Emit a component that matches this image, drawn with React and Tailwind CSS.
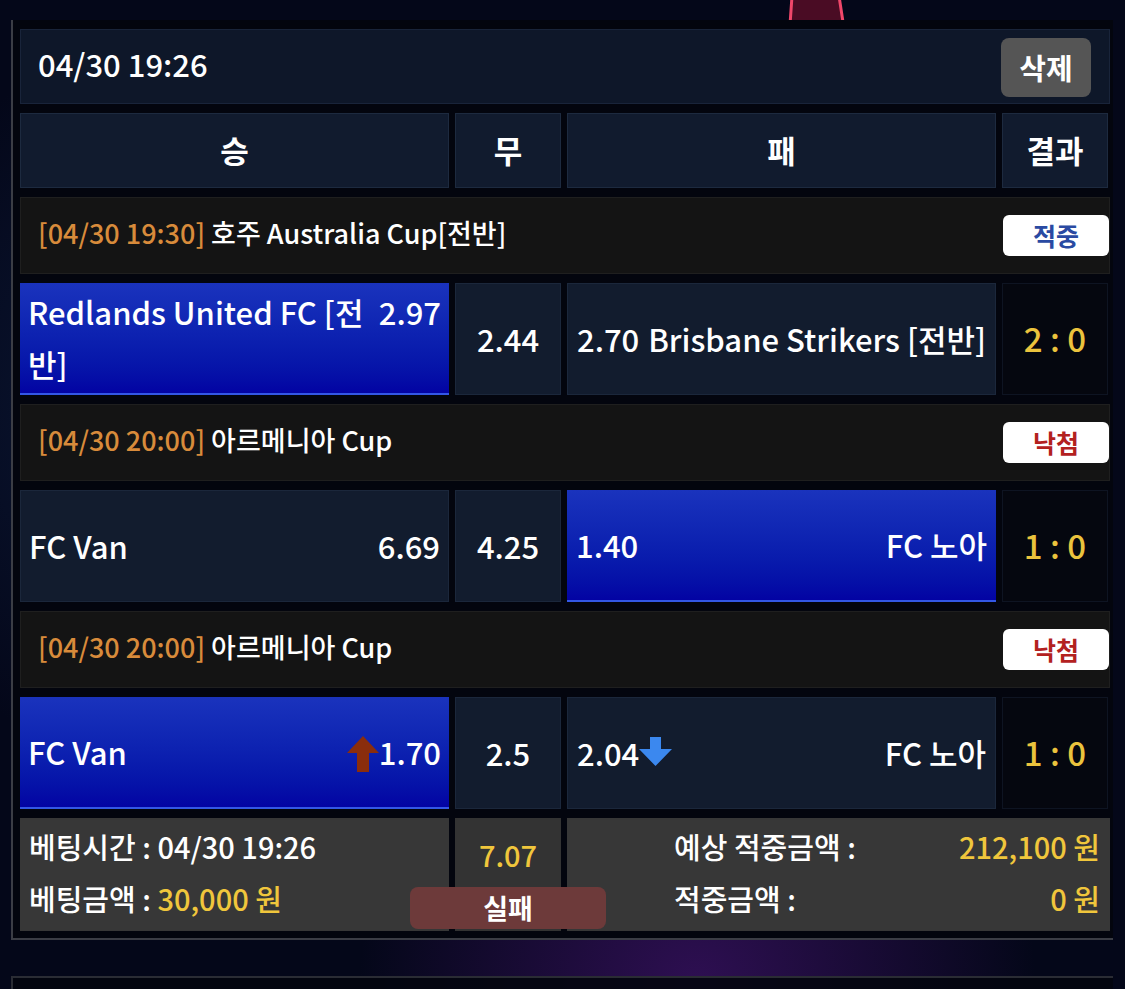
import React from 'react';

const font = { fontFamily: '"Noto Sans CJK KR", "Noto Sans", sans-serif' };

const UpArrow = () => (
  <svg width="32" height="36" viewBox="0 0 32 36" className="mt-[4px] shrink-0">
    <path d="M16 0 L32 17 L22 17 L22 36 L10 36 L10 17 L0 17 Z" fill="#8a2d0c" />
  </svg>
);

const DownArrow = () => (
  <svg width="33" height="29" viewBox="0 0 33 29" className="-mt-[4px] shrink-0">
    <path d="M11 0 L22 0 L22 12 L33 12 L16.5 29 L0 12 L11 12 Z" fill="#3b88ef" />
  </svg>
);

const Cell = ({ picked, className = '', children }) => (
  <div
    className={
      'flex items-center h-full ' +
      (picked
        ? 'bg-gradient-to-b from-[#1a33bd] to-[#0303a3] border-b-2 border-[#3357e6] '
        : 'bg-[#121c2e] border border-[#1b273b] ') +
      className
    }
  >
    {children}
  </div>
);

const MatchHeader = ({ time, league, result }) => {
  const hit = result === '적중';
  return (
    <div className="flex items-center justify-between h-[77px] bg-[#141414] border border-[#1f1f1f] pl-[17px]">
      <div className="text-[27px] text-white -mt-[4px]">
        <span className="text-[#d88b3b]">[{time}]</span> {league}
      </div>
      <div
        className={
          'w-[106px] h-[41px] bg-white rounded-md flex items-center justify-center text-[25px] font-bold ' +
          (hit ? 'text-[#2a4aa2]' : 'text-[#b3211f]')
        }
      >
        {result}
      </div>
    </div>
  );
};

const BetRow = ({ pick, home, homeOdds, draw, away, awayOdds, score, homeArrow, awayArrow }) => (
  <div className="flex gap-[6px] h-[112px]">
    <div className="w-[429px] h-full">
      <Cell picked={pick === 'home'} className="px-[8px]">
        {homeArrow ? (
          <div className="flex items-center justify-between w-full text-[31px] text-white">
            <span>{home}</span>
            <span className="flex items-center">
              <UpArrow />
              <span>{homeOdds}</span>
            </span>
          </div>
        ) : (
          <div className="w-full text-[31px] leading-[52px] text-white">
            <span className="float-right">{homeOdds}</span>
            {home}
          </div>
        )}
      </Cell>
    </div>
    <div className="w-[106px] h-full">
      <Cell className="justify-center text-[31px] text-white">{draw}</Cell>
    </div>
    <div className="w-[429px] h-full">
      <Cell picked={pick === 'away'} className="px-[9px]">
        {awayArrow ? (
          <div className="flex items-center justify-between w-full text-[31px] text-white">
            <span className="flex items-center">
              <span>{awayOdds}</span>
              <DownArrow />
            </span>
            <span>{away}</span>
          </div>
        ) : (
          <div className="w-full text-right text-[31px] leading-[52px] text-white">
            <span className="float-left">{awayOdds}</span>
            {away}
          </div>
        )}
      </Cell>
    </div>
    <div className="w-[106px] h-full flex items-center justify-center bg-[#05070f] border border-[#0e1422] text-[33px] text-[#ebc33d] whitespace-pre">
      {score}
    </div>
  </div>
);

export default function App() {
  return (
    <div
      className="min-h-[989px] bg-[#040719] bg-[radial-gradient(circle_at_62%_97%,#2e0f52_0%,transparent_28%),radial-gradient(circle_at_20%_40%,#0c1a3a_0%,transparent_35%)] pl-[11px] pr-3 overflow-hidden font-medium"
      style={font}
    >
      <div className="h-5 pl-[755px]">
        <svg width="80" height="26" viewBox="0 0 80 26" className="overflow-visible">
          <path d="M26 -4 L73 -4 L77 22 L24 25 Z" fill="#4a0c24" stroke="#f0476a" strokeWidth="3" />
        </svg>
      </div>
      <div className="relative border-l-2 border-b-2 border-[#3b3d45] bg-[#03050e] pl-[7px] pr-[3px] pt-[9px] pb-[7px] flex flex-col gap-[9px]">
        <div className="flex items-center justify-between h-[75px] bg-[#0e1729] border border-[#19243a] pl-[17px] pr-[18px]">
          <span className="text-[31px] text-white -mt-[4px]">04/30 19:26</span>
          <button className="w-[90px] h-[59px] mt-[2px] rounded-lg bg-[#555555] text-white text-[29px] font-bold">
            삭제
          </button>
        </div>

        <div className="flex gap-[6px] h-[75px] text-white text-[31px] font-bold">
          <div className="w-[429px] flex items-center justify-center bg-[#111b2e] border border-[#1d2a3f]">승</div>
          <div className="w-[106px] flex items-center justify-center bg-[#111b2e] border border-[#1d2a3f]">무</div>
          <div className="w-[429px] flex items-center justify-center bg-[#111b2e] border border-[#1d2a3f]">패</div>
          <div className="w-[106px] flex items-center justify-center bg-[#111b2e] border border-[#1d2a3f]">결과</div>
        </div>

        <MatchHeader time="04/30 19:30" league="호주 Australia Cup[전반]" result="적중" />
        <BetRow
          pick="home"
          home="Redlands United FC [전반]"
          homeOdds="2.97"
          draw="2.44"
          away="Brisbane Strikers [전반]"
          awayOdds="2.70"
          score="2 : 0"
        />

        <MatchHeader time="04/30 20:00" league="아르메니아 Cup" result="낙첨" />
        <BetRow
          pick="away"
          home="FC Van"
          homeOdds="6.69"
          draw="4.25"
          away="FC 노아"
          awayOdds="1.40"
          score="1 : 0"
        />

        <MatchHeader time="04/30 20:00" league="아르메니아 Cup" result="낙첨" />
        <BetRow
          pick="home"
          home="FC Van"
          homeOdds="1.70"
          draw="2.5"
          away="FC 노아"
          awayOdds="2.04"
          score="1 : 0"
          homeArrow
          awayArrow
        />

        <div className="flex gap-[6px] h-[113px] text-[29px]">
          <div className="w-[429px] bg-[#373737] px-[9px] pt-[2px] leading-[52px] text-white">
            <div>베팅시간 : 04/30 19:26</div>
            <div>
              베팅금액 : <span className="text-[#f0c63c]">30,000 원</span>
            </div>
          </div>
          <div className="w-[106px] bg-[#333333] flex flex-col items-center pt-[10px]">
            <div className="text-[#f0c63c] leading-[52px]">7.07</div>
            <div className="relative z-10 shrink-0 w-[196px] h-[42px] mt-[7px] rounded-lg bg-[#6d3a3a] flex items-center justify-center text-white font-bold text-[27px]">
              실패
            </div>
          </div>
          <div className="flex-1 bg-[#373737] pl-[107px] pr-[10px] pt-[2px] leading-[52px] text-white">
            <div className="flex justify-between">
              <span>예상 적중금액 :</span>
              <span className="text-[#f0c63c]">212,100 원</span>
            </div>
            <div className="flex justify-between">
              <span>적중금액 :</span>
              <span className="text-[#f0c63c]">0 원</span>
            </div>
          </div>
        </div>
      </div>

      <div className="mt-[36px] border-l-2 border-t-2 border-[#2a2c34] h-[40px] bg-[#03050e]/90"></div>
    </div>
  );
}
